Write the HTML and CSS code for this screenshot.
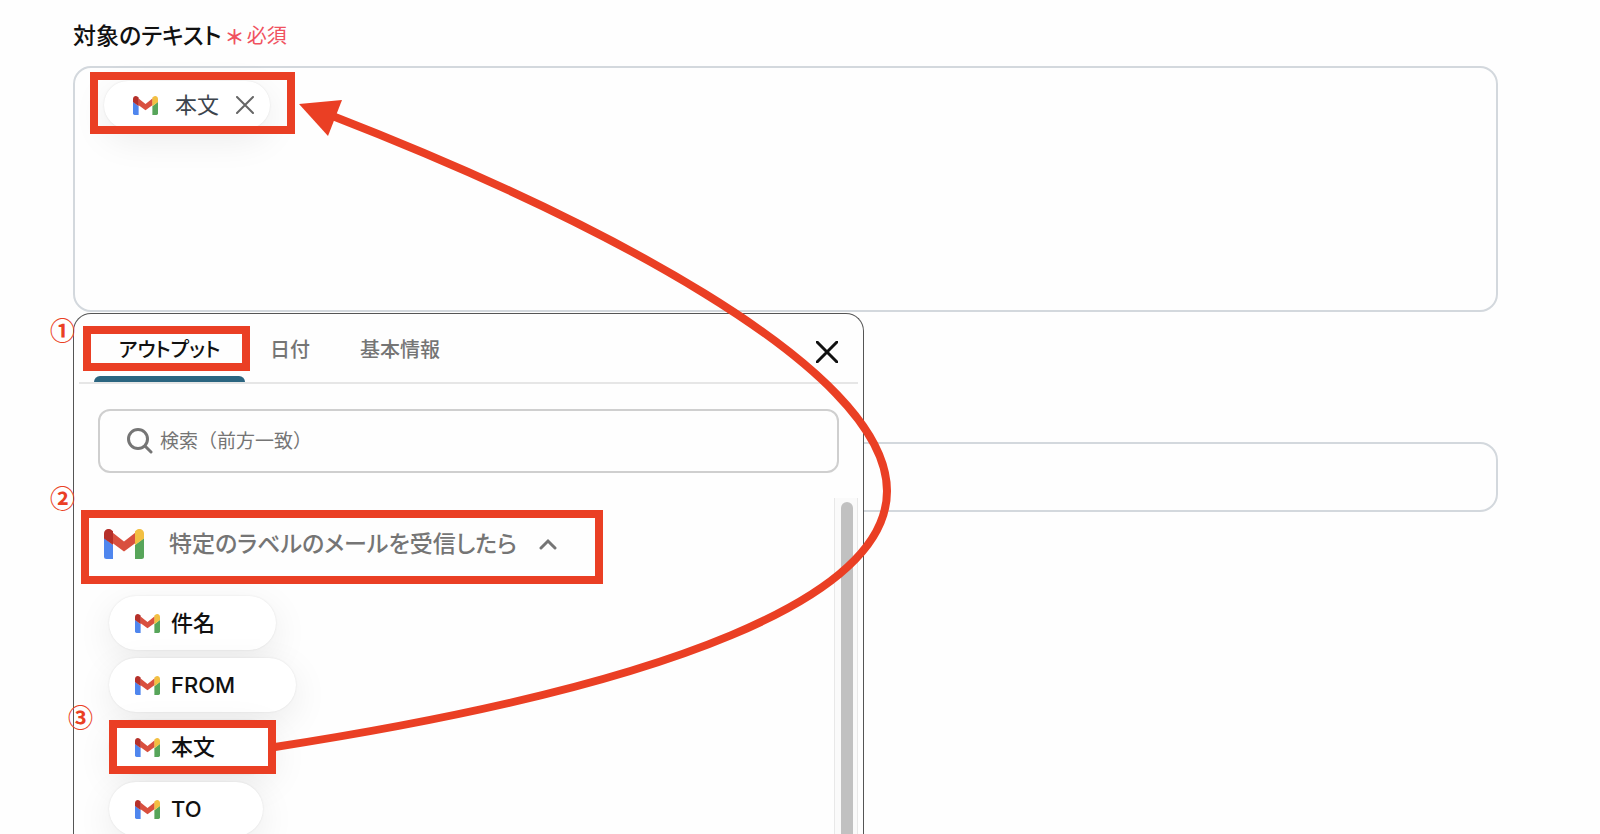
FILE: index.html
```html
<!DOCTYPE html>
<html lang="ja">
<head>
<meta charset="utf-8">
<meta name="viewport" content="width=device-width, initial-scale=1">
<title>対象のテキスト</title>
<link rel="stylesheet" href="styles.css">
</head>
<body>
<svg class="defs" aria-hidden="true">
  <symbol id="gmail" viewBox="0 0 40 30">
    <path fill="#4f86ee" d="M0 9l9 7v14H2.500A2.500 2.500 0 0 1 0 27.500z"/>
    <path fill="#57a55a" d="M40 9l-9 7v14h6.500a2.500 2.500 0 0 0 2.500-2.500z"/>
    <path fill="#d9503f" d="M8.500 3.500L20 12.500l11.500-9V14L20 22.500 8.500 14z"/>
    <path fill="#b5302a" d="M0 4.500C0 .300 4.500-1.300 7.500 1L9 2.300V16L0 9.500z"/>
    <path fill="#f2bf42" d="M40 4.500C40 .300 35.500-1.300 32.500 1L31 2.300V16l9-6.500z"/>
  </symbol>
</svg>

<main class="page">
  <div class="label-row">
    <span class="label" id="target-label">対象のテキスト</span>
    <span class="required"><span class="star">＊</span>必須</span>
  </div>

  <div class="field">
    <div class="editor" role="textbox" aria-multiline="true" aria-labelledby="target-label" tabindex="0">
      <span class="chip">
        <svg class="icon-mail"><use href="#gmail"/></svg>
        <span class="chip-text">本文</span>
        <button class="chip-remove" type="button" aria-label="削除">
          <svg viewBox="0 0 18 18"><path d="M1 1l16 16M17 1L1 17"/></svg>
        </button>
      </span>
    </div>

    <section class="panel" aria-label="アウトプット">
      <header class="tabs">
        <div class="tab-list" role="tablist">
          <button class="tab tab-active" role="tab" aria-selected="true" type="button">アウトプット</button>
          <button class="tab" role="tab" aria-selected="false" type="button">日付</button>
          <button class="tab" role="tab" aria-selected="false" type="button">基本情報</button>
        </div>
        <button class="close" type="button" aria-label="閉じる">
          <svg viewBox="0 0 22 22"><path d="M1 1l20 20M21 1L1 21"/></svg>
        </button>
      </header>

      <label class="search">
        <svg class="search-icon" viewBox="0 0 26 26"><circle cx="11" cy="11" r="9.500"/><path d="M18 18l6 6"/></svg>
        <input class="search-input" type="text" placeholder="検索（前方一致）" aria-label="検索">
      </label>

      <div class="results">
        <div class="outputs">
          <button class="group" type="button" aria-expanded="true">
            <svg class="icon-group"><use href="#gmail"/></svg>
            <span class="group-name">特定のラベルのメールを受信したら</span>
            <svg class="chevron" viewBox="0 0 18 12"><path d="M2 10l7-7 7 7"/></svg>
          </button>
          <button class="pill" type="button"><svg class="icon-mail"><use href="#gmail"/></svg>件名</button>
          <button class="pill" type="button"><svg class="icon-mail"><use href="#gmail"/></svg>FROM</button>
          <button class="pill" type="button"><svg class="icon-mail"><use href="#gmail"/></svg>本文</button>
          <button class="pill" type="button"><svg class="icon-mail"><use href="#gmail"/></svg>TO</button>
        </div>
        <div class="scrollbar"><div class="thumb"></div></div>
      </div>
    </section>
  </div>

  <input class="text-field" type="text" aria-label="テキスト">

  <div class="notes">
    <svg class="marks" aria-hidden="true">
      <rect x="94" y="76" width="197" height="54"/>
      <rect x="87" y="330" width="159" height="37"/>
      <rect x="85" y="514" width="514" height="66"/>
      <rect x="113" y="724" width="159" height="46"/>
      <path d="M275 747C676 685 887 596 887 491C887 366 585 214 330 115"/>
      <polygon points="299,104 342,100 328,136"/>
    </svg>
    <span class="step step-1">①</span>
    <span class="step step-2">②</span>
    <span class="step step-3">③</span>
  </div>
</main>
</body>
</html>
```

FILE: styles.css
```css
* {
  box-sizing: border-box;
}

body {
  margin: 0;
  background: #fefefe;
  color: #111;
  font-family: Inter, "Noto Sans CJK JP", sans-serif;
  font-feature-settings: "palt";
}

button {
  padding: 0;
  border: 0;
  background: none;
  color: inherit;
  font: inherit;
  font-feature-settings: inherit;
  cursor: pointer;
}

svg {
  display: block;
  flex: none;
}

.defs {
  position: absolute;
  width: 0;
  height: 0;
}

.page {
  position: relative;
  height: 100vh;
  overflow: hidden;
  padding: 18px 102px 0 73px;
}

.label-row {
  display: flex;
  align-items: center;
  height: 32px;
  margin-bottom: 16px;
}

.label {
  font-size: 23px;
  font-weight: 500;
}

.required {
  display: flex;
  align-items: center;
  gap: 4px;
  margin-left: 5px;
  color: #f0525f;
  font-size: 20px;
}

.star {
  padding-top: 4px;
  font-weight: 700;
}

.field {
  position: relative;
}

.editor {
  height: 246px;
  padding: 13px 29px;
  border: 2px solid #d3d8dd;
  border-radius: 18px;
}

.chip {
  display: inline-flex;
  align-items: center;
  height: 48px;
  padding: 0 16px 0 29px;
  border-radius: 24px;
  background: #fff;
  box-shadow: 0 0 2px rgba(0, 0, 0, 0.1), 0 10px 36px rgba(0, 0, 0, 0.08);
  color: #3c444d;
  font-size: 22px;
  line-height: 24px;
}

.chip-text {
  margin: 0 17px;
}

.chip-remove svg {
  width: 18px;
  height: 18px;
  fill: none;
  stroke: #666;
  stroke-width: 2;
  stroke-linecap: round;
}

.icon-mail {
  width: 25px;
  height: 19px;
}

.panel {
  position: absolute;
  top: 247px;
  left: 0;
  width: 791px;
  max-width: 100%;
  border: 1px solid #555;
  border-bottom: 0;
  border-radius: 18px 18px 0 0;
  background: #fefefe;
}

.tabs {
  display: flex;
  justify-content: space-between;
  height: 70px;
  margin: 0 5px;
  padding: 0 20px 0 15px;
  border-bottom: 2px solid #e6e6e6;
}

.tab-list {
  display: flex;
}

.tab {
  position: relative;
  padding: 0 25px;
  color: #757575;
  font-size: 20px;
  font-weight: 500;
}

.tab-active {
  width: 151px;
  padding: 0;
  color: #111;
}

.tab-active::after {
  content: "";
  position: absolute;
  right: 0;
  bottom: 0;
  left: 0;
  height: 6px;
  border-radius: 6px 6px 0 0;
  background: #2b6580;
}

.close {
  padding-top: 8px;
}

.close svg {
  width: 22px;
  height: 22px;
  fill: none;
  stroke: #111;
  stroke-width: 3;
  stroke-linecap: round;
}

.search {
  display: flex;
  align-items: center;
  gap: 7px;
  height: 64px;
  margin: 25px 24px 0;
  padding: 0 27px;
  border: 2px solid #cfcfcf;
  border-radius: 12px;
}

.search-icon {
  width: 26px;
  height: 26px;
  fill: none;
  stroke: #757575;
  stroke-width: 3;
  stroke-linecap: round;
}

.search-input {
  flex: 1;
  min-width: 0;
  padding: 0;
  border: 0;
  outline: 0;
  background: none;
  font: inherit;
  font-feature-settings: normal;
  font-size: 19px;
}

.search-input::placeholder {
  color: #757575;
  opacity: 1;
}

.results {
  display: flex;
  justify-content: space-between;
  margin: 25px 5px 0 0;
}

.outputs {
  display: flex;
  flex-direction: column;
  align-items: flex-start;
  gap: 8px;
  padding-left: 35px;
}

.group {
  display: flex;
  align-items: center;
  height: 58px;
  margin: 17px 0 15px;
  margin-left: -5px;
  color: #757575;
  font-size: 23px;
  font-weight: 500;
}

.group-name {
  padding-bottom: 4px;
}

.icon-group {
  width: 40px;
  height: 30px;
  margin-right: 25px;
}

.chevron {
  width: 18px;
  height: 12px;
  margin-left: 22px;
  fill: none;
  stroke: #757575;
  stroke-width: 3;
  stroke-linecap: round;
}

.pill {
  display: flex;
  align-items: center;
  gap: 11px;
  height: 54px;
  padding: 0 61px 0 26px;
  border-radius: 27px;
  background: #fff;
  box-shadow: 0 0 2px rgba(0, 0, 0, 0.1), 0 10px 36px rgba(0, 0, 0, 0.08);
  font-size: 22px;
  font-weight: 500;
  line-height: 24px;
}

.scrollbar {
  width: 24px;
  padding: 4px 4px 0 6px;
  border-right: 1px solid #e8e8e8;
  border-left: 1px solid #e8e8e8;
  background: #fafafa;
}

.thumb {
  height: 100%;
  border-radius: 6px 6px 0 0;
  background: #c1c1c1;
}

.text-field {
  display: block;
  width: 100%;
  height: 70px;
  margin-top: 130px;
  padding: 0 24px;
  border: 2px solid #d3d8dd;
  border-radius: 18px;
  background: none;
  font: inherit;
  font-size: 19px;
}

.notes {
  position: absolute;
  inset: 0;
  pointer-events: none;
}

.marks {
  width: 100%;
  height: 100%;
  fill: none;
  stroke: #ea3f24;
  stroke-width: 8;
}

.marks polygon {
  fill: #ea3f24;
  stroke: none;
}

.step {
  position: absolute;
  color: #ea3f24;
  font-family: "Noto Sans CJK JP", sans-serif;
  font-size: 25px;
  font-weight: 700;
  line-height: 24px;
}

.step-1 {
  top: 317px;
  left: 50px;
}

.step-2 {
  top: 485px;
  left: 50px;
}

.step-3 {
  top: 704px;
  left: 68px;
}
```
